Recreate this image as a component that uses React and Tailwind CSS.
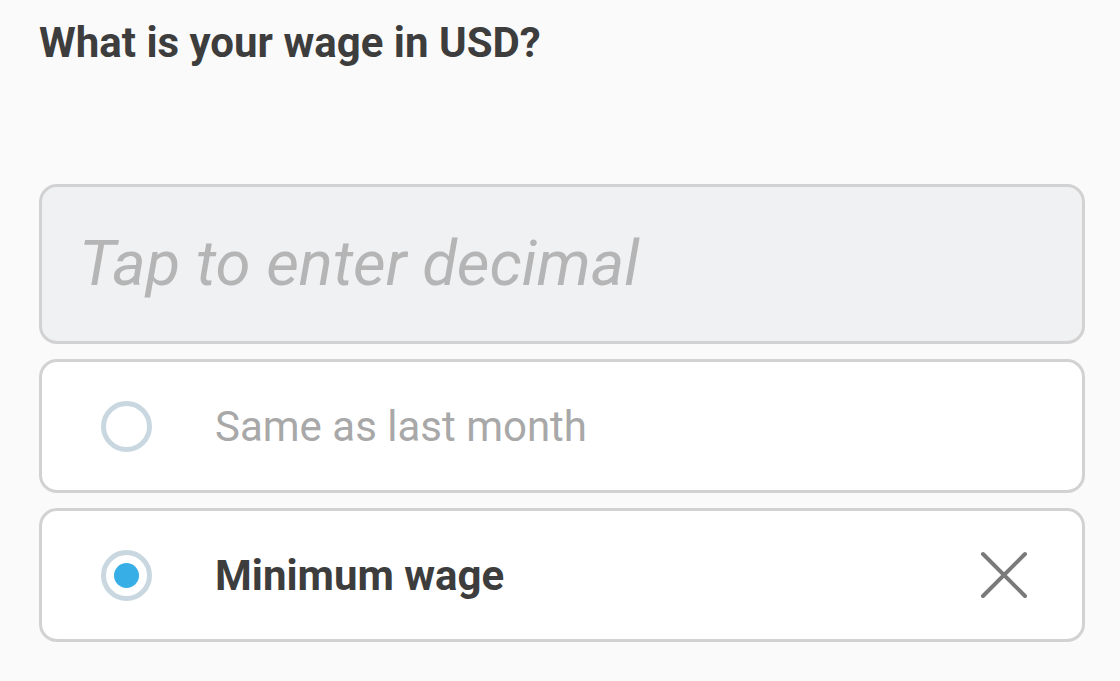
export default function App() {
    return (
        <div className="min-h-[681px] w-[1120px] bg-[#fafafa] px-[39px] pt-[17px]" style={{ fontFamily: 'Roboto, "Liberation Sans", sans-serif' }}>
            <h1 className="text-[42px] leading-[52px] font-bold text-[#3d3d3d]">What is your wage in USD?</h1>

            <div className="mt-[115px] flex flex-col gap-[15px] w-[1046px]">
                {/* decimal input */}
                <div className="h-[160px] rounded-[18px] border-[3px] border-[#d2d2d2] bg-[#f0f1f3] flex items-center pl-[37px]">
                    <span className="text-[63.5px] italic text-[#b5b5b5]">Tap to enter decimal</span>
                </div>

                <div className="h-[134px] rounded-[18px] border-[3px] border-[#d2d2d2] bg-white flex items-center pl-[59px]">
                    <div className="w-[51px] h-[51px] rounded-full border-[5px] border-[#c9d8e0]" />
                    <span className="ml-[63px] text-[42px] text-[#a8a8a8]">Same as last month</span>
                </div>

                <div className="h-[134px] rounded-[18px] border-[3px] border-[#d2d2d2] bg-white flex items-center pl-[59px] pr-[54px]">
                    <div className="w-[51px] h-[51px] rounded-full border-[5px] border-[#c9d8e0] flex items-center justify-center">
                        <div className="w-[25px] h-[25px] rounded-full bg-[#37aee6]" />
                    </div>
                    <span className="ml-[63px] text-[42px] font-bold text-[#3d3d3d]">Minimum wage</span>
                    <svg className="ml-auto" width="48" height="48" viewBox="0 0 48 48">
                        <path d="M3 3 L45 45 M45 3 L3 45" stroke="#7a7a7a" strokeWidth="4" strokeLinecap="round" />
                    </svg>
                </div>
            </div>
        </div>
    );
}
